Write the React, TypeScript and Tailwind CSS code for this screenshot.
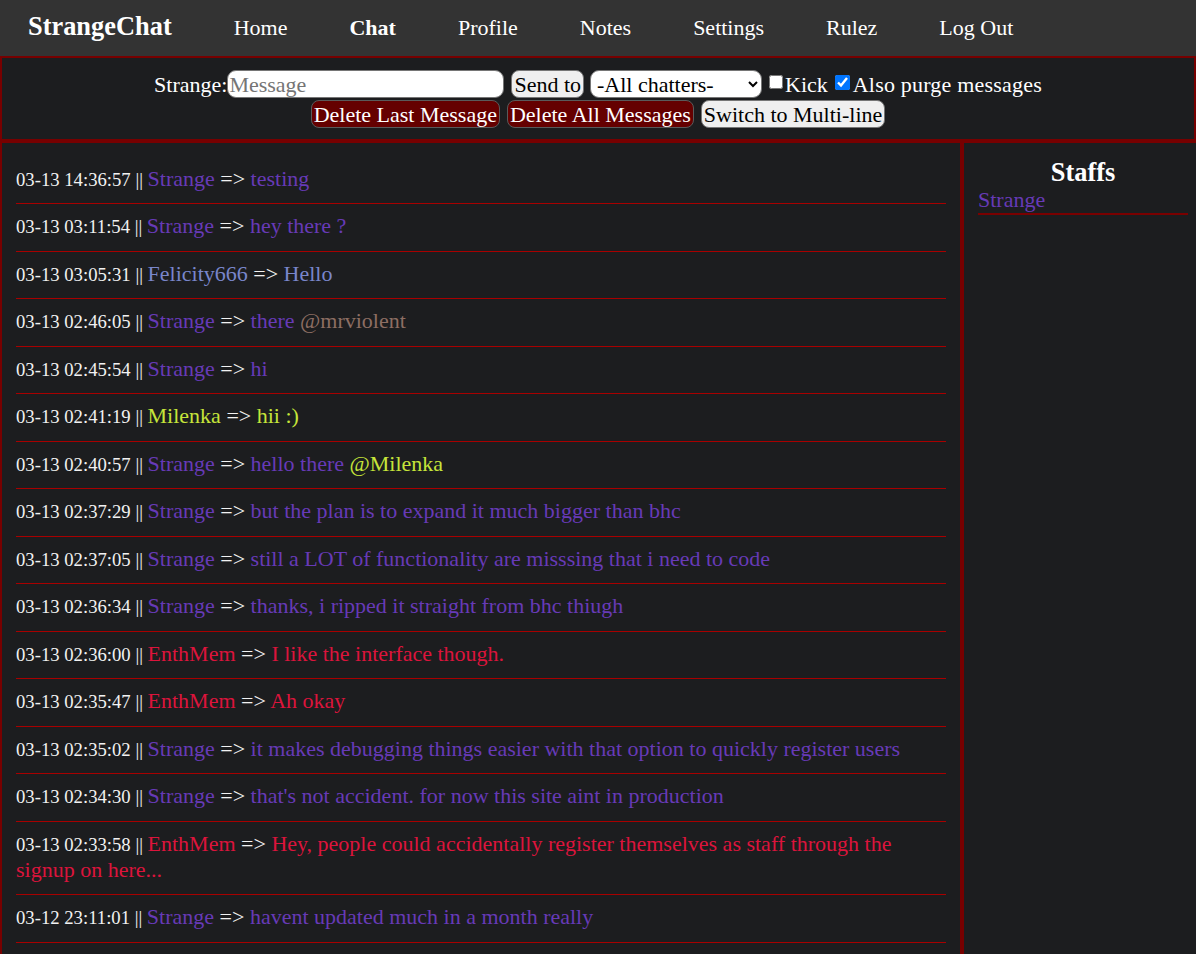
import React from "react";

type Seg = { text: string; cls: string };

type Msg = {
  time: string;
  name: string;
  nameCls: string;
  parts: Seg[];
};

const STRANGE = "text-[#673ab7]";
const FELICITY = "text-[#7986cb]";
const MILENKA = "text-[#c6e53a]";
const VIOLENT = "text-[#8d6e63]";
const ENTH = "text-[#dc143c]";

const messages: Msg[] = [
  { time: "03-13 14:36:57", name: "Strange", nameCls: STRANGE, parts: [{ text: "testing", cls: STRANGE }] },
  { time: "03-13 03:11:54", name: "Strange", nameCls: STRANGE, parts: [{ text: "hey there ?", cls: STRANGE }] },
  { time: "03-13 03:05:31", name: "Felicity666", nameCls: FELICITY, parts: [{ text: "Hello", cls: FELICITY }] },
  {
    time: "03-13 02:46:05",
    name: "Strange",
    nameCls: STRANGE,
    parts: [
      { text: "there ", cls: STRANGE },
      { text: "@mrviolent", cls: VIOLENT },
    ],
  },
  { time: "03-13 02:45:54", name: "Strange", nameCls: STRANGE, parts: [{ text: "hi", cls: STRANGE }] },
  { time: "03-13 02:41:19", name: "Milenka", nameCls: MILENKA, parts: [{ text: "hii :)", cls: MILENKA }] },
  {
    time: "03-13 02:40:57",
    name: "Strange",
    nameCls: STRANGE,
    parts: [
      { text: "hello there ", cls: STRANGE },
      { text: "@Milenka", cls: MILENKA },
    ],
  },
  { time: "03-13 02:37:29", name: "Strange", nameCls: STRANGE, parts: [{ text: "but the plan is to expand it much bigger than bhc", cls: STRANGE }] },
  { time: "03-13 02:37:05", name: "Strange", nameCls: STRANGE, parts: [{ text: "still a LOT of functionality are misssing that i need to code", cls: STRANGE }] },
  { time: "03-13 02:36:34", name: "Strange", nameCls: STRANGE, parts: [{ text: "thanks, i ripped it straight from bhc thiugh", cls: STRANGE }] },
  { time: "03-13 02:36:00", name: "EnthMem", nameCls: ENTH, parts: [{ text: "I like the interface though.", cls: ENTH }] },
  { time: "03-13 02:35:47", name: "EnthMem", nameCls: ENTH, parts: [{ text: "Ah okay", cls: ENTH }] },
  { time: "03-13 02:35:02", name: "Strange", nameCls: STRANGE, parts: [{ text: "it makes debugging things easier with that option to quickly register users", cls: STRANGE }] },
  { time: "03-13 02:34:30", name: "Strange", nameCls: STRANGE, parts: [{ text: "that's not accident. for now this site aint in production", cls: STRANGE }] },
  {
    time: "03-13 02:33:58",
    name: "EnthMem",
    nameCls: ENTH,
    parts: [{ text: "Hey, people could accidentally register themselves as staff through the signup on here...", cls: ENTH }],
  },
  { time: "03-12 23:11:01", name: "Strange", nameCls: STRANGE, parts: [{ text: "havent updated much in a month really", cls: STRANGE }] },
];

const navLinks = ["Home", "Chat", "Profile", "Notes", "Settings", "Rulez", "Log Out"];

const lightBtn =
  "h-[28px] px-[2px] rounded-[8px] border border-[#767676] bg-[#efefef] text-black text-[22px] leading-[25px]";
const redBtn =
  "h-[28px] px-[2px] rounded-[8px] border border-[#5a5a5a] bg-[#650000] text-white text-[22px] leading-[25px]";

export default function App() {
  return (
    <div className="min-h-screen bg-[#1c1d1f] text-white font-['Liberation_Serif',serif]">
      {/* top nav */}
      <nav className="h-[56px] bg-[#333333] flex items-center gap-[6px] pb-[2px]">
        <a className="px-[28px] text-[26.4px] font-bold">StrangeChat</a>
        {navLinks.map((l) => (
          <a key={l} className={`px-[28px] text-[22px] ${l === "Chat" ? "font-bold" : ""}`}>
            {l}
          </a>
        ))}
      </nav>

      {/* controls */}
      <div className="border-2 border-[#770000] pt-[12px] pb-[11px] flex flex-col items-center gap-[2px] text-[22px]">
        <div className="flex items-center h-[28px]">
          <span>Strange:</span>
          <input
            type="text"
            placeholder="Message"
            className="w-[277px] h-[28px] rounded-[9px] border border-[#767676] bg-white text-black px-[1px] text-[22px] placeholder:text-[#757575] outline-none"
          />
          <button className={`${lightBtn} ml-[7px]`}>Send to</button>
          <select className="ml-[6px] w-[172px] h-[28px] rounded-[9px] border border-[#767676] bg-white text-black text-[22px] px-[2px]">
            <option>-All chatters-</option>
          </select>
          <input type="checkbox" className="ml-[7px] mr-[2px] w-[14px] h-[14px] mb-[4px]" />
          <span>Kick</span>
          <input type="checkbox" defaultChecked className="ml-[7px] mr-[3px] w-[15px] h-[15px] mb-[4px] accent-[#0075ff]" />
          <span className="tracking-[0.2px]">Also purge messages</span>
        </div>
        <div className="flex items-center gap-[7px]">
          <button className={redBtn}>Delete Last Message</button>
          <button className={redBtn}>Delete All Messages</button>
          <button className={lightBtn}>Switch to Multi-line</button>
        </div>
      </div>

      {/* chat + staffs */}
      <div className="flex">
        <div className="w-[962px] border-2 border-[#770000] px-[14px] pt-[14px] pb-[12px]">
          {messages.map((m, i) => (
            <div
              key={i}
              className={`border-b border-[#a80000] pt-[9px] text-[22px] leading-[26px] ${i % 2 ? "pb-[12px]" : "pb-[11px]"}`}
            >
              <span className="text-[18.7px] leading-[0] text-[#f2f2f2]">{m.time} || </span>
              <span className={m.nameCls}>{m.name}</span>
              <span className="text-[#f2f2f2]"> =&gt; </span>
              {m.parts.map((p, j) => (
                <span key={j} className={p.cls}>
                  {p.text}
                </span>
              ))}
            </div>
          ))}
        </div>
        <div className="flex-1 border-2 border-r-0 border-[#770000] pl-[14px] pr-[8px] pt-[14px]">
          <h2 className="text-center text-[26.4px] font-bold leading-[30px]">Staffs</h2>
          <div className={`${STRANGE} text-[22px] leading-[26px] border-b-2 border-[#7a0000]`}>Strange</div>
        </div>
      </div>
    </div>
  );
}
